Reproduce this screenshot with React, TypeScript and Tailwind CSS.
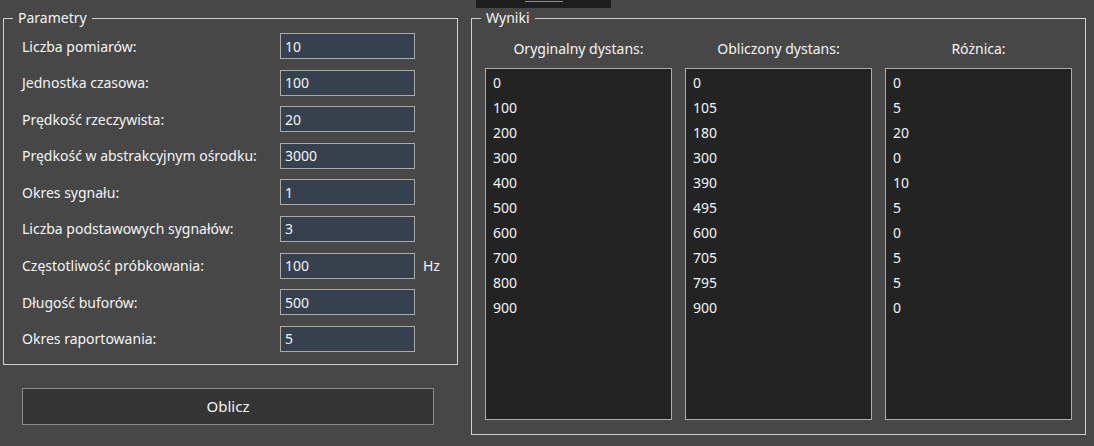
const params = [
  { label: 'Liczba pomiarów:', value: '10' },
  { label: 'Jednostka czasowa:', value: '100' },
  { label: 'Prędkość rzeczywista:', value: '20' },
  { label: 'Prędkość w abstrakcyjnym ośrodku:', value: '3000' },
  { label: 'Okres sygnału:', value: '1' },
  { label: 'Liczba podstawowych sygnałów:', value: '3' },
  { label: 'Częstotliwość próbkowania:', value: '100', unit: 'Hz' },
  { label: 'Długość buforów:', value: '500' },
  { label: 'Okres raportowania:', value: '5' },
];

const columns = [
  { title: 'Oryginalny dystans:', values: ['0', '100', '200', '300', '400', '500', '600', '700', '800', '900'] },
  { title: 'Obliczony dystans:', values: ['0', '105', '180', '300', '390', '495', '600', '705', '795', '900'] },
  { title: 'Różnica:', values: ['0', '5', '20', '0', '10', '5', '0', '5', '5', '0'] },
];

export default function App() {
  return (
    <div className="w-[1094px] h-[446px] bg-[#474747] text-[#f4f4f4] font-['Noto_Sans',sans-serif] text-[14px] overflow-hidden flex flex-col">
      {/* leftover strip at the top */}
      <div className="h-[8px] flex shrink-0">
        <div className="ml-[476px] w-[135px] h-[8px] bg-[#1e1e1e] flex pt-[1px]">
          <div className="ml-[49px] w-[38px] h-[1px] bg-[#8a8a8a]" />
        </div>
      </div>

      <div className="flex">
        {/* Parametry */}
        <div className="ml-[3px] w-[455px] flex flex-col">
          <fieldset className="h-[357px] border border-[#cfcfcf]">
            <legend className="ml-[9px] px-[5px] leading-[20px]">Parametry</legend>
            <div className="flex flex-col gap-[10.6px] pl-[18px] pt-[5px]">
              {params.map((p) => (
                <div key={p.label} className="flex items-center h-[26px]">
                  <span className="w-[258px]">{p.label}</span>
                  <div className="w-[135px] h-[26px] bg-[#36414d] border border-[#ababab] px-[4px] flex items-center">
                    {p.value}
                  </div>
                  {p.unit && <span className="ml-[8px]">{p.unit}</span>}
                </div>
              ))}
            </div>
          </fieldset>
          <button className="mt-[23px] ml-[19px] w-[412px] h-[37px] bg-[#353535] border border-[#8a8a8a] text-[#f4f4f4] text-[15px]">
            Oblicz
          </button>
        </div>

        {/* Wyniki */}
        <fieldset className="ml-[13px] w-[614px] h-[427px] border border-[#cfcfcf]">
          <legend className="ml-[9px] px-[5px] leading-[20px]">Wyniki</legend>
          <div className="flex gap-[13px] px-[13px] pt-[10px]">
            {columns.map((c) => (
              <div key={c.title} className="w-[187px] flex flex-col">
                <div className="h-[20px] flex items-center justify-center">{c.title}</div>
                <div className="mt-[10px] h-[352px] bg-[#232323] border border-[#ababab] pt-[1px] px-[7px] flex flex-col">
                  {c.values.map((v, i) => (
                    <div key={i} className="h-[25px] flex items-center">{v}</div>
                  ))}
                </div>
              </div>
            ))}
          </div>
        </fieldset>
      </div>
    </div>
  );
}
